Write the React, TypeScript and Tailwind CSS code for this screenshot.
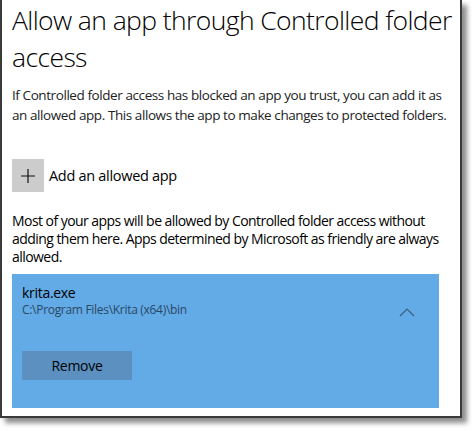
import React from "react";

export default function App() {
  return (
    <div className="w-[475px] h-[431px] bg-white overflow-hidden" style={{ fontFamily: '"Open Sans", "Noto Sans", sans-serif' }}>
      <div className="w-[462px] h-[418px] bg-white border-l-2 border-r-2 border-b-2 border-[#3a3a3a] shadow-[5px_5px_5px_rgba(0,0,0,0.45)] pl-[10px] pr-[10px] flex flex-col">
        <h1 className="text-[26.5px] leading-[37px] font-light text-black tracking-[-0.6px] mt-[2px] whitespace-nowrap">
          Allow an app through Controlled folder
          <br />
          access
        </h1>
        <p className="text-[13.5px] leading-[20px] text-[#222] mt-[9px] tracking-[-0.42px] whitespace-nowrap">
          If Controlled folder access has blocked an app you trust, you can add it as
          <br />
          an allowed app. This allows the app to make changes to protected folders.
        </p>
        <div className="flex items-center mt-[34px] gap-[5px]">
          <div className="w-[32px] h-[33px] bg-[#cccccc] flex items-center justify-center">
            <svg width="14" height="14" viewBox="0 0 14 14">
              <path d="M7 0V14M0 7H14" stroke="#111" strokeWidth="1.2" />
            </svg>
          </div>
          <span className="text-[14.5px] text-black tracking-[-0.3px]">Add an allowed app</span>
        </div>
        <p className="text-[14px] leading-[18px] text-black mt-[20px] tracking-[-0.55px] whitespace-nowrap">
          Most of your apps will be allowed by Controlled folder access without
          <br />
          adding them here. Apps determined by Microsoft as friendly are always
          <br />
          allowed.
        </p>
        <div className="w-[427px] h-[134px] bg-[#63abe6] mt-[8px] flex flex-col pl-[10px] pr-[24px] pt-[10px]">
          <div className="flex items-start justify-between">
            <div className="flex flex-col">
              <span className="text-[14px] leading-[18px] text-black tracking-[-0.3px]">krita.exe</span>
              <span className="text-[12px] leading-[16px] text-[#2a4763] tracking-[-0.3px]">C:\Program Files\Krita (x64)\bin</span>
            </div>
            <svg width="16" height="10" viewBox="0 0 16 10" className="mt-[23px]">
              <path d="M1 9L8 2L15 9" stroke="#3c5f80" strokeWidth="1.2" fill="none" />
            </svg>
          </div>
          <button className="mt-[33px] w-[110px] h-[29px] bg-[#5b90c0] text-[14px] text-black tracking-[-0.3px] flex items-center justify-center">
            Remove
          </button>
        </div>
      </div>
    </div>
  );
}
